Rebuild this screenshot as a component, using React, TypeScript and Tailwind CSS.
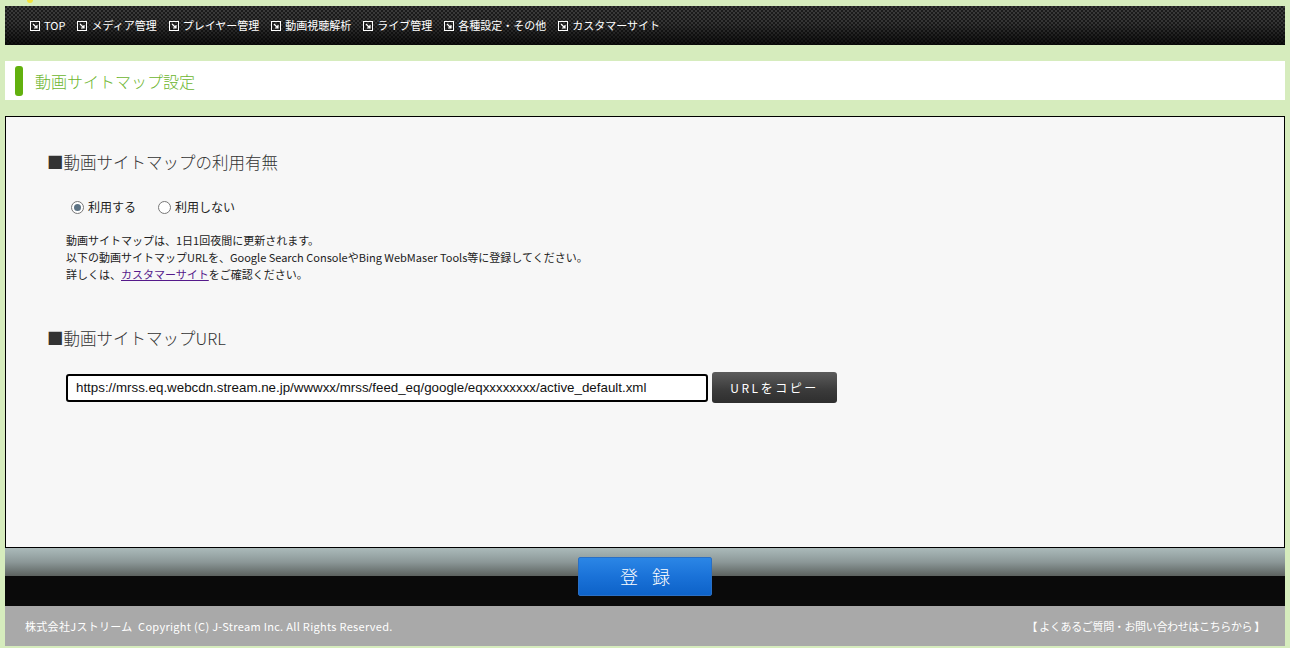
import React from "react";

const navItems = ["TOP", "メディア管理", "プレイヤー管理", "動画視聴解析", "ライブ管理", "各種設定・その他", "カスタマーサイト"];

function NavIcon() {
  return (
    <svg width="10" height="10" viewBox="0 0 10 10" className="shrink-0">
      <rect x="0.5" y="0.5" width="9" height="9" fill="none" stroke="#fff" strokeWidth="1" />
      <path d="M3 3 L7 7 M7 4 L7 7 L4 7" fill="none" stroke="#fff" strokeWidth="1.2" />
    </svg>
  );
}

function Radio({ checked }: { checked?: boolean }) {
  return (
    <span className="w-[13px] h-[13px] rounded-full border border-[#777] bg-white flex items-center justify-center shrink-0">
      {checked && <span className="w-[7px] h-[7px] rounded-full bg-[#5d7384]" />}
    </span>
  );
}

export default function App() {
  const jp = "font-['Noto_Sans_CJK_JP','Noto_Sans',sans-serif]";
  return (
    <div className={`w-[1290px] h-[648px] bg-[#d6ecbd] overflow-hidden relative ${jp}`}>
      <div className="absolute left-[27px] top-0 w-[6px] h-[3px] rounded-b-full bg-[#f2e23a]" />
      <div className="pt-[6px] px-[5px]">
        {/* nav */}
        <div className="h-[39px] flex items-center pl-[25px] gap-[12px] [background:linear-gradient(to_bottom,rgba(0,0,0,0)_0%,rgba(0,0,0,0.15)_45%,rgba(0,0,0,0.75)_100%),repeating-conic-gradient(#3c3c3c_0_25%,#1c1c1c_0_50%)_0_0/4px_4px]">
          {navItems.map((t) => (
            <div key={t} className="flex items-center gap-[4px] text-white text-[11px] leading-none">
              <NavIcon />
              <span>{t}</span>
            </div>
          ))}
        </div>
        {/* title */}
        <div className="mt-[16px] h-[39px] bg-white flex items-center pl-[10px] gap-[12px]">
          <div className="w-[8px] h-[30px] rounded-[3px] bg-[#62b00e]" />
          <div className="text-[#6cb52e] text-[16px] font-light leading-none">動画サイトマップ設定</div>
        </div>
        {/* main */}
        <div className="mt-[16px] h-[432px] border border-black bg-[#f7f7f7] pl-[41px] pt-[33px]">
          <div className="text-[16.5px] font-light leading-[24px] text-[#333]">■動画サイトマップの利用有無</div>
          <div className="mt-[24px] ml-[24px] flex items-center text-[12px] text-[#222]">
            <Radio checked />
            <span className="ml-[4px]">利用する</span>
            <span className="ml-[22px]"><Radio /></span>
            <span className="ml-[4px]">利用しない</span>
          </div>
          <div className="mt-[16px] ml-[19px] text-[11px] leading-[17px] text-[#222]">
            <div>動画サイトマップは、1日1回夜間に更新されます。</div>
            <div>以下の動画サイトマップURLを、Google Search ConsoleやBing WebMaser Tools等に登録してください。</div>
            <div>
              詳しくは、<span className="text-[#551a8b] underline">カスタマーサイト</span>をご確認ください。
            </div>
          </div>
          <div className="mt-[43px] text-[16.5px] font-light leading-[24px] text-[#333]">■動画サイトマップURL</div>
          <div className="mt-[22px] ml-[19px] flex items-center gap-[4px]">
            <div className="w-[642px] h-[28px] border-2 border-black rounded-[3px] bg-white flex items-center pl-[8px] font-['Liberation_Sans',Arial,sans-serif] text-[13.33px] text-[#111]">
              https://mrss.eq.webcdn.stream.ne.jp/wwwxx/mrss/feed_eq/google/eqxxxxxxxx/active_default.xml
            </div>
            <div className="w-[125px] h-[31px] rounded-[3px] bg-[linear-gradient(to_bottom,#5c5c5c,#3a3a3a_60%,#2e2e2e)] text-white text-[12px] tracking-[2.5px] flex items-center justify-center">
              URLをコピー
            </div>
          </div>
        </div>
        {/* action band */}
        <div className="relative h-[58px]">
          <div className="h-[28px] bg-[linear-gradient(to_bottom,#abbaba,#8c9898_50%,#5c625f)]" />
          <div className="h-[30px] bg-[#0a0a0a]" />
          <div className="absolute left-[573px] top-[9px] w-[134px] h-[39px] rounded-[2px] border border-[#2a6fc4] bg-[linear-gradient(to_bottom,#2b86e6,#1a72d8_50%,#0d62c8)] flex items-center justify-center text-white text-[18px] font-light tracking-[14px] pl-[14px]">
            登録
          </div>
        </div>
        {/* footer */}
        <div className="h-[40px] bg-[#a9a9a9] flex items-center justify-between px-[20px] text-white text-[11px]">
          <span className="tracking-[0.3px]">株式会社Jストリーム&nbsp; Copyright (C) J-Stream Inc. All Rights Reserved.</span>
          <span className="tracking-[-0.35px]">【 よくあるご質問・お問い合わせはこちらから 】</span>
        </div>
      </div>
    </div>
  );
}
